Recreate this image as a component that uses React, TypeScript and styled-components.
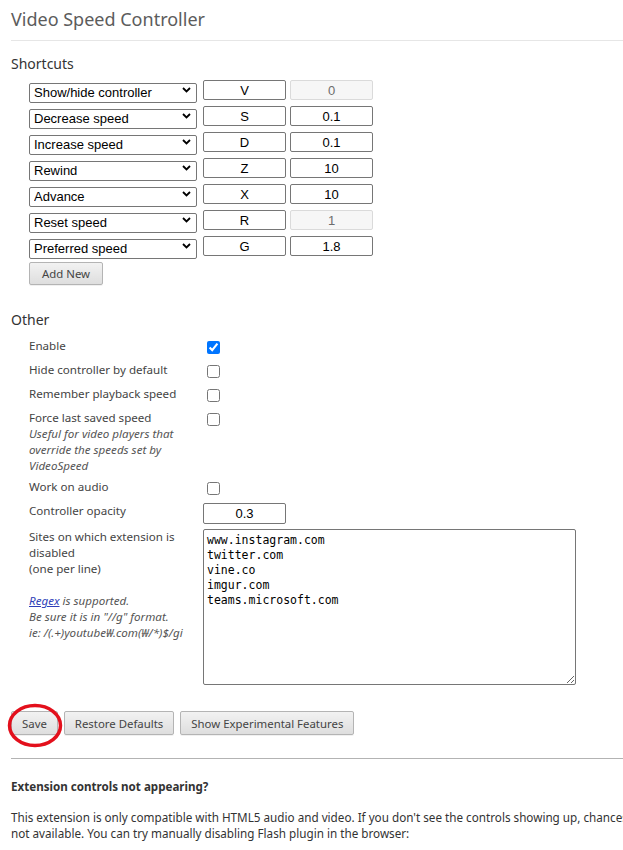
import React from 'react';
import styled, { createGlobalStyle } from 'styled-components';

const Global = createGlobalStyle`
  html, body { margin: 0; padding: 0; background: #fff; overflow: hidden; }
  body { font-family: "Noto Sans", "Open Sans", sans-serif; color: #333; }
`;

const Page = styled.div`
  width: 1500px;
  padding-left: 11px;
  box-sizing: border-box;
`;

const Header = styled.header`
  border-bottom: 1px solid #e6e6e6;
  padding-top: 7px;
  height: 33px;
`;

const Title = styled.h1`
  margin: 0;
  font-size: 18px;
  line-height: 24px;
  font-weight: 400;
  color: #5c5c5c;
`;

const SectionTitle = styled.h3<{ $top: number }>`
  margin: ${(p) => p.$top}px 0 0;
  font-size: 14px;
  line-height: 18px;
  font-weight: 400;
  color: #333;
`;

const ShortcutList = styled.div`
  display: flex;
  flex-direction: column;
  gap: 6px;
  margin: 7px 0 0 18px;
`;

const ShortcutRow = styled.div`
  display: flex;
  align-items: center;
`;

const SelectWrap = styled.div`
  position: relative;
  width: 168px;
  height: 20px;
  margin-right: 6px;
`;

const Select = styled.select`
  appearance: none;
  width: 100%;
  height: 100%;
  box-sizing: border-box;
  border: 1px solid #767676;
  border-radius: 2px;
  background: #fff;
  font-family: "Liberation Sans", Arial, sans-serif;
  font-size: 13px;
  color: #000;
  padding: 0 0 0 4px;
  margin: 0;
  outline: none;
`;

const Chevron = styled.svg`
  position: absolute;
  right: 6px;
  top: 7px;
  pointer-events: none;
`;

const ShortInput = styled.input<{ $gap?: number }>`
  width: 83px;
  height: 20px;
  box-sizing: border-box;
  margin: 0 ${(p) => p.$gap ?? 0}px 0 0;
  border: 1px solid #767676;
  border-radius: 2px;
  text-align: center;
  font-family: "Liberation Sans", Arial, sans-serif;
  font-size: 13px;
  color: #000;
  padding: 0;
  background: #fff;
  &:disabled {
    background: #f6f6f6;
    border-color: #dadada;
    color: #6d6d6d;
  }
`;

const GrayButton = styled.button<{ $h?: number; $pad?: number }>`
  height: ${(p) => p.$h ?? 24}px;
  padding: 0 ${(p) => p.$pad ?? 10}px;
  border: 1px solid #b4b4b4;
  border-radius: 2px;
  background: linear-gradient(#f2f2f2, #dedede);
  font-family: "Noto Sans", "Open Sans", sans-serif;
  font-size: 11.4px;
  color: #444;
  margin: 0;
  box-shadow: 0 1px 0 rgba(0, 0, 0, 0.06);
`;

const AddRow = styled.div`
  margin: 5px 0 0 18px;
`;

const OptionList = styled.div`
  margin: 9px 0 0 18px;
`;

const OptionRow = styled.div`
  display: grid;
  grid-template-columns: 174px 1fr;
  align-items: start;
  margin-bottom: 5px;
`;

const Label = styled.div`
  font-size: 11.6px;
  line-height: 16px;
  color: #444;
`;

const Note = styled.div`
  font-style: italic;
  color: #555;
`;

const Link = styled.a`
  color: #2f3fb8;
  text-decoration: underline;
`;

const Check = styled.input`
  width: 13px;
  height: 13px;
  margin: 3px 3px 3px 4px;
  display: block;
`;

const OpacityInput = styled(ShortInput)`
  height: 21px;
`;

const Sites = styled.textarea`
  display: block;
  width: 373px;
  height: 156px;
  box-sizing: border-box;
  margin: 0;
  padding: 3px 3px;
  border: 1px solid #767676;
  border-radius: 2px;
  font-family: "DejaVu Sans Mono", "Liberation Mono", monospace;
  font-size: 11.5px;
  line-height: 15px;
  color: #000;
  resize: both;
`;

const ButtonRow = styled.div`
  display: flex;
  gap: 6px;
  margin-top: 26px;
`;

const Marked = styled.div`
  position: relative;
  display: flex;
`;

const Circle = styled.svg`
  position: absolute;
  left: -4px;
  top: -8px;
  pointer-events: none;
`;

const Help = styled.section`
  margin-top: 23px;
  border-top: 1px solid #b3b3b3;
`;

const HelpTitle = styled.h4`
  margin: 20px 0 0;
  font-size: 11.6px;
  line-height: 16px;
  font-weight: 700;
  color: #333;
`;

const HelpText = styled.p`
  margin: 14px 0 0;
  font-size: 11.7px;
  line-height: 16px;
  color: #333;
  white-space: nowrap;
`;

const shortcuts = [
  { action: 'Show/hide controller', key: 'V', value: '0', disabled: true },
  { action: 'Decrease speed', key: 'S', value: '0.1' },
  { action: 'Increase speed', key: 'D', value: '0.1' },
  { action: 'Rewind', key: 'Z', value: '10' },
  { action: 'Advance', key: 'X', value: '10' },
  { action: 'Reset speed', key: 'R', value: '1', disabled: true },
  { action: 'Preferred speed', key: 'G', value: '1.8' },
];

const actions = shortcuts.map((s) => s.action);

const checks = [
  { label: 'Enable', checked: true },
  { label: 'Hide controller by default', checked: false },
  { label: 'Remember playback speed', checked: false },
];

export default function App() {
  return (
    <Page>
      <Global />
      <Header>
        <Title>Video Speed Controller</Title>
      </Header>

      <SectionTitle $top={14}>Shortcuts</SectionTitle>
      <ShortcutList>
        {shortcuts.map((s) => (
          <ShortcutRow key={s.action}>
            <SelectWrap>
              <Select defaultValue={s.action}>
                {actions.map((a) => (
                  <option key={a}>{a}</option>
                ))}
              </Select>
              <Chevron width="9" height="6" viewBox="0 0 9 6">
                <path d="M1 1 L4.5 4.5 L8 1" fill="none" stroke="#000" strokeWidth="1.8" />
              </Chevron>
            </SelectWrap>
            <ShortInput $gap={4} defaultValue={s.key} readOnly />
            <ShortInput defaultValue={s.value} disabled={s.disabled} readOnly />
          </ShortcutRow>
        ))}
      </ShortcutList>
      <AddRow>
        <GrayButton $h={23} $pad={12}>Add New</GrayButton>
      </AddRow>

      <SectionTitle $top={26}>Other</SectionTitle>
      <OptionList>
        {checks.map((c) => (
          <OptionRow key={c.label}>
            <Label>{c.label}</Label>
            <Check type="checkbox" defaultChecked={c.checked} />
          </OptionRow>
        ))}
        <OptionRow>
          <Label>
            Force last saved speed
            <Note>Useful for video players that override the speeds set by VideoSpeed</Note>
          </Label>
          <Check type="checkbox" />
        </OptionRow>
        <OptionRow>
          <Label>Work on audio</Label>
          <Check type="checkbox" />
        </OptionRow>
        <OptionRow>
          <Label>Controller opacity</Label>
          <OpacityInput defaultValue="0.3" readOnly />
        </OptionRow>
        <OptionRow>
          <Label>
            Sites on which extension is disabled
            <br />
            (one per line)
            <br />
            <br />
            <Note>
              <Link href="#">Regex</Link> is supported.
              <br />
              Be sure it is in "//g" format.
              <br />
              ie: /(.+)youtube₩.com(₩/*)$/gi
            </Note>
          </Label>
          <Sites
            spellCheck={false}
            defaultValue={'www.instagram.com\ntwitter.com\nvine.co\nimgur.com\nteams.microsoft.com'}
          />
        </OptionRow>
      </OptionList>

      <ButtonRow>
        <Marked>
          <GrayButton>Save</GrayButton>
          <Circle width="56" height="45" viewBox="0 0 56 45">
            <ellipse cx="28" cy="22.5" rx="25.5" ry="20" fill="none" stroke="#e3101c" strokeWidth="3.5" />
          </Circle>
        </Marked>
        <GrayButton>Restore Defaults</GrayButton>
        <GrayButton>Show Experimental Features</GrayButton>
      </ButtonRow>

      <Help>
        <HelpTitle>Extension controls not appearing?</HelpTitle>
        <HelpText>
          This extension is only compatible with HTML5 audio and video. If you don't see the controls showing up, chances are you are viewing a Flash video. If you want to confirm, try right-clicking on the video and inspect the menu: if it mentions flash, then that's the issue. That said, <b>most sites will fallback to HTML5</b> if they detect that Flash is
          <br />
          not available. You can try manually disabling Flash plugin in the browser:
        </HelpText>
      </Help>
    </Page>
  );
}
